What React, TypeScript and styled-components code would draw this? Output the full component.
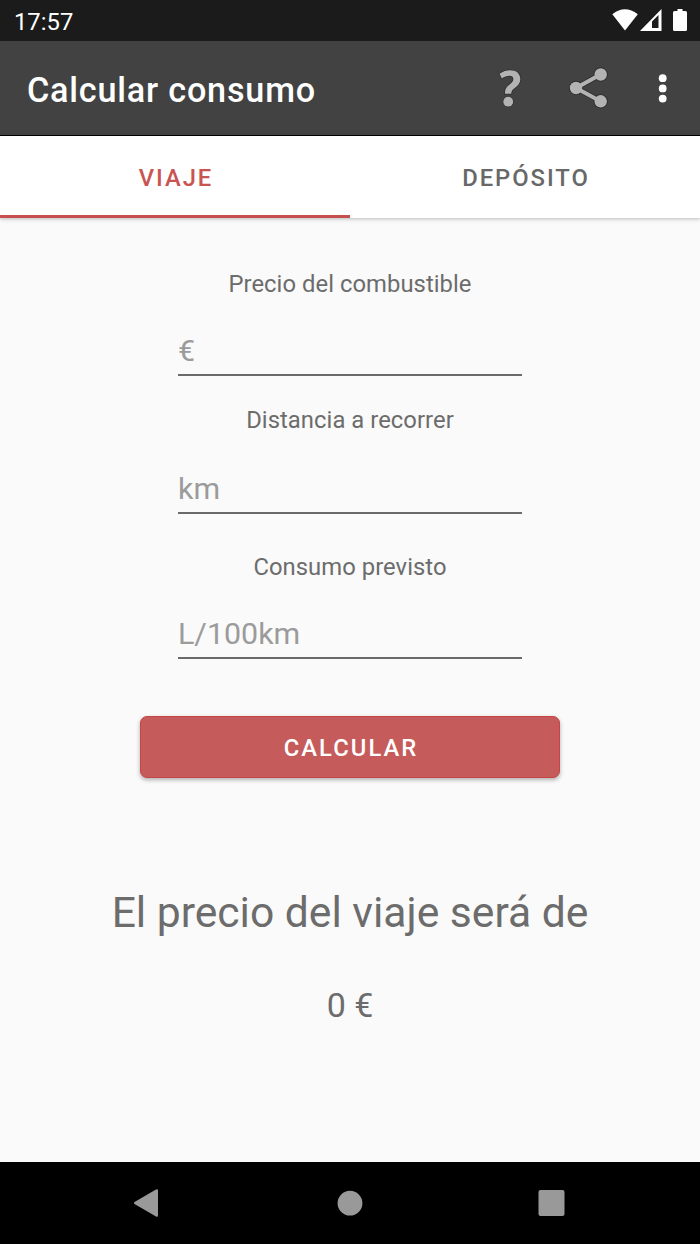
import React from "react";
import styled, { createGlobalStyle } from "styled-components";

const GlobalStyle = createGlobalStyle`
  * { box-sizing: border-box; }
  body { margin: 0; background: #fafafa; }
`;

const Screen = styled.div`
  width: 700px;
  height: 1244px;
  display: flex;
  flex-direction: column;
  background: #fafafa;
  font-family: Roboto, "Liberation Sans", sans-serif;
  overflow: hidden;
`;

const StatusBar = styled.header`
  height: 41px;
  flex: none;
  display: flex;
  align-items: center;
  justify-content: space-between;
  padding: 0 12px 0 14px;
  background: #1b1b1b;
  color: #fff;
`;

const Clock = styled.span`
  font-size: 23.8px;
  line-height: 28px;
  padding-top: 2px;
`;

const StatusIcons = styled.svg`
  display: block;
  width: 76px;
  height: 41px;
`;

const AppBar = styled.div`
  height: 95px;
  flex: none;
  display: flex;
  align-items: center;
  padding: 0 3px 0 27px;
  background: #424242;
  border-bottom: 1px solid #000;
`;

const Title = styled.h1`
  flex: 1;
  margin: 0;
  padding-top: 3px;
  font-size: 34.2px;
  line-height: 40px;
  font-weight: 500;
  letter-spacing: 0.8px;
  color: #fff;
`;

const Actions = styled.div`
  display: flex;
  align-items: center;
`;

const ActionButton = styled.button<{ $width: number }>`
  width: ${(p) => p.$width}px;
  height: 60px;
  padding: 0;
  border: 0;
  background: none;
  display: flex;
  align-items: center;
  justify-content: center;
`;

const Tabs = styled.nav`
  height: 82px;
  flex: none;
  display: flex;
  background: #fff;
  box-shadow: 0 1px 3px rgba(0, 0, 0, 0.2), 0 3px 6px rgba(0, 0, 0, 0.05);
`;

const Tab = styled.button<{ $active?: boolean }>`
  flex: 1;
  padding: 5px 0 0 2px;
  border: 0;
  border-bottom: 3px solid ${(p) => (p.$active ? "#c5504e" : "transparent")};
  background: none;
  font-family: inherit;
  font-size: 23.8px;
  line-height: 28px;
  font-weight: 500;
  letter-spacing: 1.95px;
  color: ${(p) => (p.$active ? "#c95452" : "#686868")};
`;

const Form = styled.main`
  flex: 1;
  display: flex;
  flex-direction: column;
  align-items: center;
  padding-top: 52px;
`;

const Field = styled.label<{ $gap: number }>`
  width: 344px;
  display: flex;
  flex-direction: column;
  margin-bottom: ${(p) => p.$gap}px;
`;

const FieldName = styled.span`
  font-size: 23.8px;
  line-height: 28px;
  letter-spacing: 0.05px;
  text-align: center;
  color: #6c6c6c;
`;

const FieldInput = styled.input<{ $height: number }>`
  width: 100%;
  height: ${(p) => p.$height}px;
  padding: ${(p) => p.$height - 49}px 0 0;
  border: 0;
  border-bottom: 2px solid #6a6a6a;
  border-radius: 0;
  outline: 0;
  background: none;
  font-family: inherit;
  font-size: 30.4px;
  color: #212121;
  &::placeholder {
    color: #9b9b9b;
    opacity: 1;
  }
`;

const CalculateButton = styled.button`
  width: 420px;
  height: 62px;
  padding: 2px 0 0 2px;
  border: 1px solid #c64545;
  border-radius: 7px;
  background: #c65b5b;
  box-shadow: 0 2px 4px rgba(0, 0, 0, 0.3);
  color: #fff;
  font-family: inherit;
  font-size: 23.8px;
  line-height: 28px;
  font-weight: 500;
  letter-spacing: 2.05px;
`;

const ResultText = styled.p`
  margin: 109px 0 0;
  font-size: 42.6px;
  line-height: 50px;
  color: #6c6c6c;
`;

const ResultValue = styled.p`
  margin: 48px 0 0;
  font-size: 34px;
  line-height: 40px;
  color: #6c6c6c;
`;

const NavBar = styled.footer`
  height: 82px;
  flex: none;
  display: flex;
  justify-content: center;
  gap: 162px;
  align-items: center;
  background: #000;
`;

const NavButton = styled.button`
  width: 40px;
  height: 40px;
  padding: 0;
  border: 0;
  background: none;
  svg { display: block; }
`;

const fields = [
  { name: "Precio del combustible", hint: "€", height: 78, gap: 30 },
  { name: "Distancia a recorrer", hint: "km", height: 80, gap: 39 },
  { name: "Consumo previsto", hint: "L/100km", height: 78, gap: 57 },
];

export default function App() {
  return (
    <>
      <GlobalStyle />
      <Screen>
        <StatusBar>
          <Clock>17:57</Clock>
          <StatusIcons viewBox="612 0 76 41" fill="#fff">
            <path d="M612.3 14.2Q625 4.200 637.8 14.2L625 30.500Z" />
            <path
              fillRule="evenodd"
              d="M640 31L661.500 9V31ZM652 28H658.500V15L652 21.500Z"
            />
            <path d="M677.500 9h5v2h3q1.500 0 1.500 1.500V29.500q0 1.500-1.500 1.500h-11q-1.500 0-1.500-1.500V12.500q0-1.500 1.500-1.500h3Z" />
          </StatusIcons>
        </StatusBar>
        <AppBar>
          <Title>Calcular consumo</Title>
          <Actions>
            <ActionButton $width={80} aria-label="Ayuda">
              <svg width="30" height="44" viewBox="494 66 30 44">
                <path
                  d="M499.500 73.800C503 71.300 506.500 70.200 510 70.200C516.500 70.200 520.300 73.600 520.300 79C520.300 83.500 517.500 86 514.500 88.200C512 90 511.300 91 511.300 93.700H504.900C504.900 89.500 506 87.500 509 85C511.800 82.700 513.300 81.500 513.300 79C513.300 76.800 511.800 75.800 509.500 75.800C507 75.800 504.500 76.800 501.800 78.400Z"
                  fill="#b3b3b3"
                  stroke="#2d2d2d"
                  strokeWidth="1.500"
                  paintOrder="stroke"
                />
                <circle cx="508.200" cy="101.700" r="4.900" fill="#b3b3b3" stroke="#2d2d2d" strokeWidth="1.200" paintOrder="stroke" />
              </svg>
            </ActionButton>
            <ActionButton $width={80} aria-label="Compartir">
              <svg width="44" height="44" viewBox="567 66 44 44">
                <g stroke="#2d2d2d" fill="none">
                  <path d="M600.500 74.500L576 88L600.500 101.200" strokeWidth="5.500" />
                  <circle cx="576" cy="88" r="6.400" strokeWidth="1.500" />
                  <circle cx="600.700" cy="74.500" r="6.400" strokeWidth="1.500" />
                  <circle cx="600.700" cy="101.300" r="6.400" strokeWidth="1.500" />
                  <path d="M600.500 74.500L576 88L600.500 101.200" stroke="#b3b3b3" strokeWidth="4" />
                </g>
                <g fill="#b3b3b3">
                  <circle cx="576" cy="88" r="6.200" />
                  <circle cx="600.700" cy="74.500" r="6.200" />
                  <circle cx="600.700" cy="101.300" r="6.200" />
                </g>
              </svg>
            </ActionButton>
            <ActionButton $width={68} aria-label="Más opciones">
              <svg width="12" height="32" viewBox="0 0 12 32" fill="#fff">
                <circle cx="5.700" cy="6.200" r="3.900" />
                <circle cx="5.700" cy="16.400" r="3.900" />
                <circle cx="5.700" cy="26.600" r="3.900" />
              </svg>
            </ActionButton>
          </Actions>
        </AppBar>
        <Tabs>
          <Tab $active>VIAJE</Tab>
          <Tab>DEPÓSITO</Tab>
        </Tabs>
        <Form>
          {fields.map((f) => (
            <Field key={f.name} $gap={f.gap}>
              <FieldName>{f.name}</FieldName>
              <FieldInput $height={f.height} placeholder={f.hint} />
            </Field>
          ))}
          <CalculateButton>CALCULAR</CalculateButton>
          <ResultText>El precio del viaje será de</ResultText>
          <ResultValue>0 €</ResultValue>
        </Form>
        <NavBar>
          <NavButton aria-label="Atrás">
            <svg width="40" height="40" viewBox="0 0 40 40" fill="#999">
              <path d="M28 6.500Q30 5.500 30 7.500V32.500Q30 34.500 28 33.500L6.500 21Q5 20 6.500 19Z" />
            </svg>
          </NavButton>
          <NavButton aria-label="Inicio">
            <svg width="40" height="40" viewBox="0 0 40 40" fill="#999">
              <circle cx="20" cy="20.200" r="12.400" />
            </svg>
          </NavButton>
          <NavButton aria-label="Recientes">
            <svg width="40" height="40" viewBox="0 0 40 40" fill="#999">
              <rect x="6.500" y="7" width="26" height="26" rx="2" />
            </svg>
          </NavButton>
        </NavBar>
      </Screen>
    </>
  );
}
